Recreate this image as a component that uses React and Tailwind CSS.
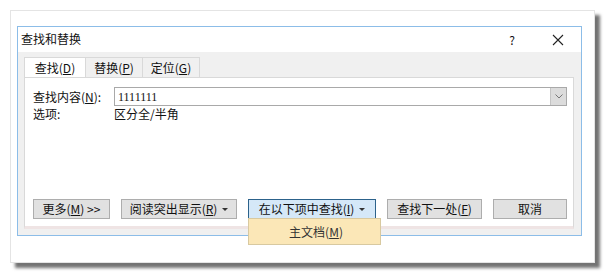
import React from "react";

const font = { fontFamily: '"Noto Sans CJK SC", "Liberation Sans", sans-serif' };

function Btn({ children, className = "", w }) {
  return (
    <div
      className={`h-[20px] flex items-center justify-center border text-[12px] leading-none text-[#111] ${className}`}
      style={{ width: w }}
    >
      {children}
    </div>
  );
}

function Caret() {
  return <span className="ml-[5px] inline-block border-l-[3px] border-r-[3px] border-t-[3px] border-l-transparent border-r-transparent border-t-[#333]" />;
}

export default function App() {
  return (
    <div className="w-[606px] h-[275px] bg-white pt-[10px] pl-[10px]" style={font}>
      <div className="w-[585px] h-[253px] bg-white border border-[#e4e4e4] shadow-[5px_5px_3px_rgba(0,0,0,0.55)] pt-[15px] pl-[6px]">
        <div className="w-[565px] h-[210px] border border-[#8cbde8] bg-[#f0f0f0] flex flex-col">
          {/* title bar */}
          <div className="h-[25px] bg-white flex items-center pl-[3px] pr-[17px] text-[12px] text-[#111]">
            <span className="flex-1 -mt-[2px]">查找和替换</span>
            <span className="w-[12px] text-center mr-[34px]">?</span>
            <svg width="12" height="12" viewBox="0 0 12 12">
              <path d="M1 1L11 11M11 1L1 11" stroke="#222" strokeWidth="1.1" />
            </svg>
          </div>
          {/* body */}
          <div className="flex-1 pt-[5px] pl-[6px] pr-[7px] pb-[6px] flex flex-col">
            <div className="flex h-[20px] text-[12px] text-[#111]">
              <div className="w-[62px] bg-white border border-b-0 border-[#d9d9d9] flex items-center justify-center">查找(<span className="underline">D</span>)</div>
              <div className="w-[57px] border-t border-r border-[#d9d9d9] flex items-center justify-center">替换(<span className="underline">P</span>)</div>
              <div className="w-[57px] border-t border-r border-[#d9d9d9] flex items-center justify-center">定位(<span className="underline">G</span>)</div>
            </div>
            <div className="flex-1 bg-white border border-[#d9d9d9] border-b-[3px] border-b-[#efe4e4] flex flex-col pl-[8px] pr-[6px] pt-[9px] pb-[7px] text-[12px] text-[#111]">
              <div className="flex items-center h-[19px]">
                <span className="w-[81px]">查找内容(<span className="underline">N</span>):</span>
                <div className="flex-1 h-[19px] border border-[#a9a9a9] flex items-center pl-[3px]">
                  <span className="flex-1" style={{ fontFamily: '"Liberation Serif", serif' }}>1111111</span>
                  <div className="w-[16px] h-[17px] bg-[#dcdcdc] border-l border-[#c4c4c4] flex items-center justify-center">
                    <svg width="8" height="5" viewBox="0 0 8 5">
                      <path d="M0.5 0.5L4 4L7.5 0.5" stroke="#777" fill="none" />
                    </svg>
                  </div>
                </div>
              </div>
              <div className="flex items-center h-[16px]">
                <span className="w-[81px]">选项:</span>
                <span>区分全/半角</span>
              </div>
              <div className="flex-1" />
              <div className="flex items-center gap-[11px]">
                <Btn w="77px" className="bg-[#e1e1e1] border-[#adadad]">
                  更多(<span className="underline">M</span>)&nbsp;&gt;&gt;
                </Btn>
                <Btn w="116px" className="bg-[#e1e1e1] border-[#adadad]">
                  阅读突出显示(<span className="underline">R</span>)<Caret />
                </Btn>
                <div className="relative">
                  <Btn w="128px" className="bg-[#d5e8f8] border-[#2c628b]">
                    在以下项中查找(<span className="underline">I</span>)<Caret />
                  </Btn>
                  <div className="absolute left-0 top-[19px] w-[133px] h-[27px] bg-[#fbe7b7] border border-[#d8c9a0] flex items-center justify-center text-[12px] text-[#333] pl-[3px]">
                    主文档(<span className="underline">M</span>)
                  </div>
                </div>
                <Btn w="95px" className="bg-[#e1e1e1] border-[#adadad]">
                  查找下一处(<span className="underline">F</span>)
                </Btn>
                <Btn w="74px" className="bg-[#e1e1e1] border-[#adadad]">
                  取消
                </Btn>
              </div>
            </div>
          </div>
        </div>
      </div>
    </div>
  );
}
